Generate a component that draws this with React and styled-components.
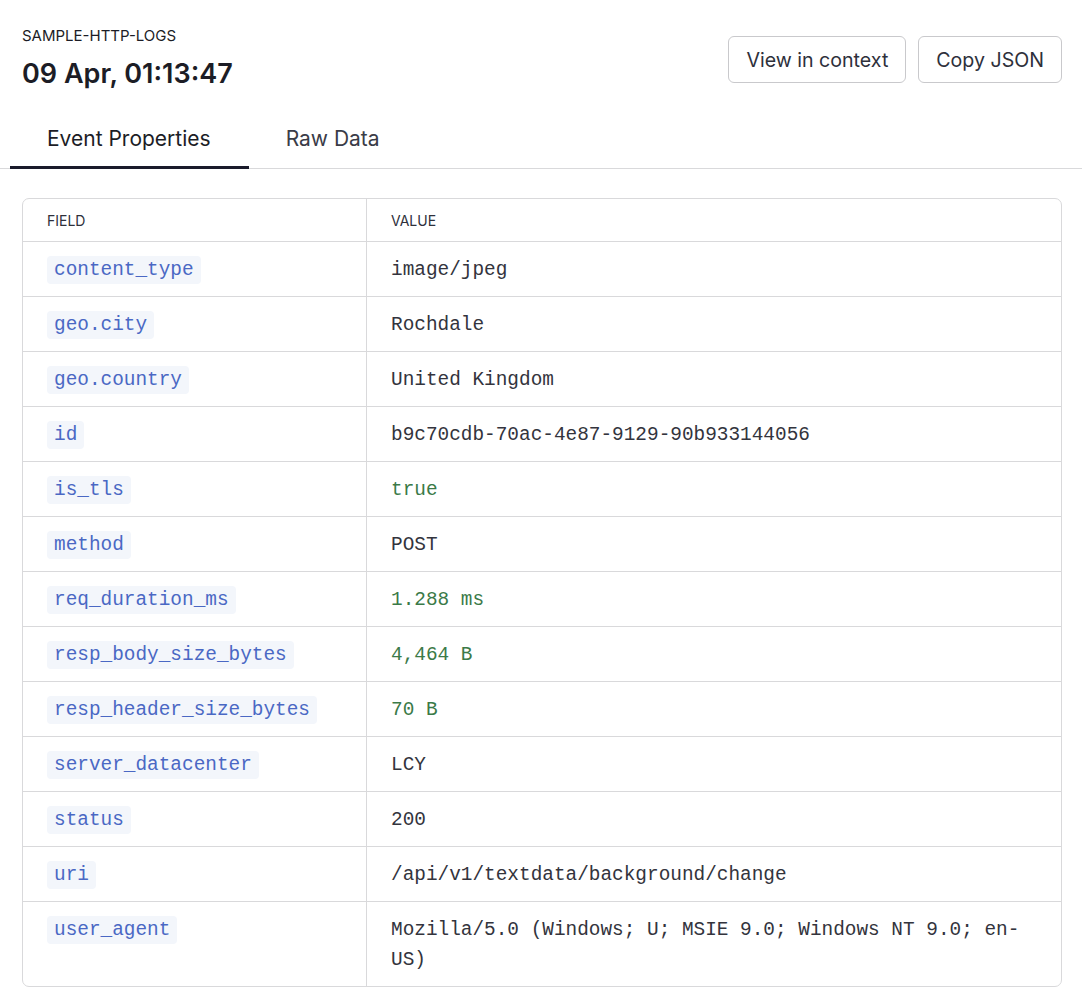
import React, { useState } from "react";
import styled, { createGlobalStyle } from "styled-components";

const rows = [
  { field: "content_type", value: "image/jpeg" },
  { field: "geo.city", value: "Rochdale" },
  { field: "geo.country", value: "United Kingdom" },
  { field: "id", value: "b9c70cdb-70ac-4e87-9129-90b933144056" },
  { field: "is_tls", value: "true", typed: true },
  { field: "method", value: "POST" },
  { field: "req_duration_ms", value: "1.288 ms", typed: true },
  { field: "resp_body_size_bytes", value: "4,464 B", typed: true },
  { field: "resp_header_size_bytes", value: "70 B", typed: true },
  { field: "server_datacenter", value: "LCY" },
  { field: "status", value: "200" },
  { field: "uri", value: "/api/v1/textdata/background/change" },
  {
    field: "user_agent",
    // zero-width space lets the line break after the hyphen like the original
    value: "Mozilla/5.0 (Windows; U; MSIE 9.0; Windows NT 9.0; en-\u200BUS)",
  },
];

function App() {
  const [activeTab, setActiveTab] = useState("Event Properties");

  return (
    <Page>
      <GlobalStyle />
      <Header>
        <div>
          <Source>SAMPLE-HTTP-LOGS</Source>
          <Title>09 Apr, 01:13:47</Title>
        </div>
        <Actions>
          <Button>View in context</Button>
          <Button>Copy JSON</Button>
        </Actions>
      </Header>

      <Tabs>
        {["Event Properties", "Raw Data"].map((t) => (
          <Tab key={t} $active={activeTab === t} onClick={() => setActiveTab(t)}>
            {t}
          </Tab>
        ))}
      </Tabs>

      <Table>
        <thead>
          <tr>
            <Th $first>Field</Th>
            <Th>Value</Th>
          </tr>
        </thead>
        <tbody>
          {rows.map((r) => (
            <tr key={r.field}>
              <FieldCell>
                <Key>{r.field}</Key>
              </FieldCell>
              <ValueCell $typed={r.typed}>{r.value}</ValueCell>
            </tr>
          ))}
        </tbody>
      </Table>
    </Page>
  );
}

const GlobalStyle = createGlobalStyle`
  body {
    margin: 0;
    background: #ffffff;
    font-family: Inter, "Liberation Sans", sans-serif;
    color: #1c1d26;
  }
`;

const Page = styled.div`
  width: 1082px;
  padding-top: 27px;
  padding-bottom: 20px;
`;

const Header = styled.div`
  display: flex;
  justify-content: space-between;
  align-items: flex-start;
  padding: 0 20px 0 22px;
`;

const Source = styled.div`
  font-size: 15px;
  line-height: 18px;
  color: #1c1d26;
`;

const Title = styled.h1`
  margin: 12px 0 0;
  font-size: 27px;
  line-height: 34px;
  font-weight: 600;
  color: #1c1d26;
`;

const Actions = styled.div`
  display: flex;
  gap: 12px;
  margin-top: 9px;
`;

const Button = styled.button`
  height: 47px;
  padding: 0 17px;
  background: #ffffff;
  border: 1px solid #c9c9cc;
  border-radius: 6px;
  font-family: Inter, "Liberation Sans", sans-serif;
  font-size: 19.6px;
  color: #2e303b;
  cursor: pointer;
`;

const Tabs = styled.div`
  display: flex;
  margin-top: 22px;
  padding-left: 10px;
  border-bottom: 1px solid #d9d9db;
`;

const Tab = styled.div`
  padding: 14px 38px 15px 37px;
  font-size: 21px;
  line-height: 24px;
  color: ${(p) => (p.$active ? "#1c1d26" : "#3a3c47")};
  font-weight: 400;
  margin-bottom: -1px;
  border-bottom: 3px solid ${(p) => (p.$active ? "#1a1b2b" : "transparent")};
  cursor: pointer;
`;

const Table = styled.table`
  margin: 29px 20px 0 22px;
  width: 1040px;
  border-collapse: separate;
  border-spacing: 0;
  border: 1px solid #d9d9db;
  border-radius: 7px;
  table-layout: fixed;

  tbody tr td {
    border-top: 1px solid #d9d9db;
  }
`;

const Th = styled.th`
  width: ${(p) => (p.$first ? "295px" : "auto")};
  height: 42px;
  padding: 0 24px;
  text-align: left;
  font-size: 14px;
  font-weight: 400;
  text-transform: uppercase;
  color: #2e303b;
  border-left: ${(p) => (p.$first ? "none" : "1px solid #d9d9db")};
`;

const FieldCell = styled.td`
  padding: 12px 24px;
  vertical-align: top;
`;

const Key = styled.span`
  display: inline-block;
  padding: 1px 7px 0;
  line-height: 27px;
  border-radius: 4px;
  background: #f3f6fb;
  color: #4a68c4;
  font-family: "Liberation Mono", "DejaVu Sans Mono", monospace;
  font-size: 19.4px;
  position: relative;
  top: 2px;
`;

const ValueCell = styled.td`
  padding: 13px 24px 11px;
  border-left: 1px solid #d9d9db;
  vertical-align: top;
  font-family: "Liberation Mono", "DejaVu Sans Mono", monospace;
  font-size: 19.4px;
  line-height: 30px;
  color: ${(p) => (p.$typed ? "#3b7a48" : "#33343d")};
`;

export default App;
